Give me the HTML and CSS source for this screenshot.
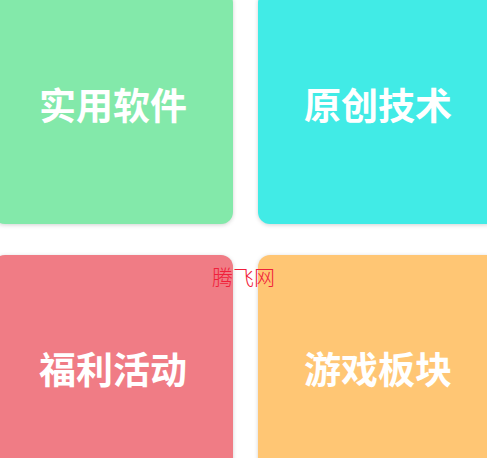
FILE: index.html
```html
<!DOCTYPE html>
<html lang="zh">
<head>
<meta charset="utf-8">
<link rel="stylesheet" href="styles.css">
</head>
<body>
<div class="grid">
  <div class="tile green">实用软件</div>
  <div class="tile cyan">原创技术</div>
  <div class="tile red">福利活动</div>
  <div class="tile orange">游戏板块</div>
</div>
<div class="watermark">腾飞网</div>
</body>
</html>
```
FILE: styles.css
```css
html, body {
  margin: 0;
  padding: 0;
  width: 487px;
  height: 458px;
  overflow: hidden;
  background: #ffffff;
  font-family: "Noto Sans CJK SC", "Noto Sans", sans-serif;
}
.grid {
  display: grid;
  grid-template-columns: 240px 240px;
  grid-auto-rows: 233px;
  column-gap: 25px;
  row-gap: 31px;
  margin-left: -7px;
  margin-top: -9px;
}
.tile {
  display: flex;
  align-items: center;
  justify-content: center;
  padding-bottom: 8px;
  box-sizing: border-box;
  border-radius: 12px;
  color: #ffffff;
  font-size: 37px;
  font-weight: 700;
  box-shadow: 0 1px 4px rgba(0, 0, 0, 0.18);
}
.green { background: #83e9aa; }
.cyan { background: #41ebe6; }
.red { background: #f07c85; }
.orange { background: #ffc674; }
.watermark {
  position: absolute;
  left: 212px;
  top: 266px;
  font-size: 21px;
  line-height: 1;
  font-weight: 300;
  color: #f0203a;
}
```
